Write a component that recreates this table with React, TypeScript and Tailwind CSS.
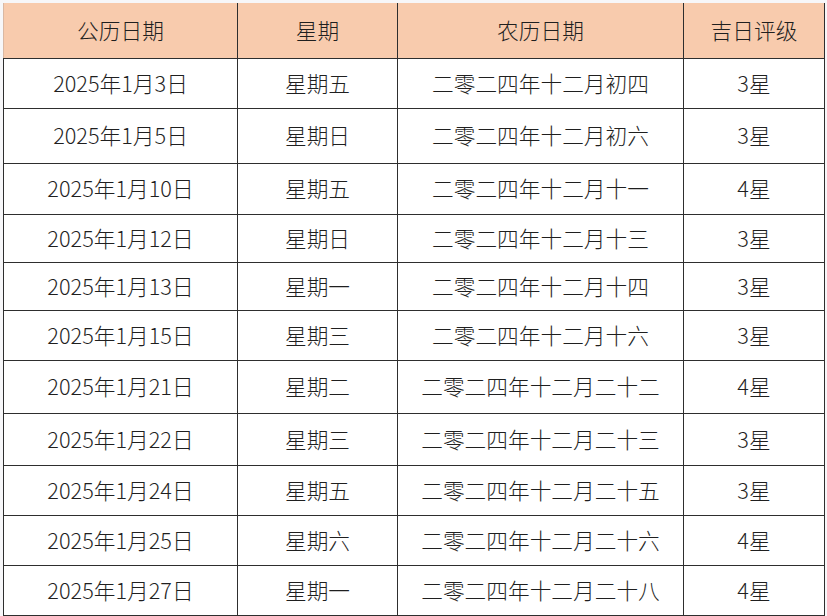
const rows = [
  { date: '2025年1月3日', week: '星期五', lunar: '二零二四年十二月初四', star: '3星', h: 'h-[50px]' },
  { date: '2025年1月5日', week: '星期日', lunar: '二零二四年十二月初六', star: '3星', h: 'h-[55px]' },
  { date: '2025年1月10日', week: '星期五', lunar: '二零二四年十二月十一', star: '4星', h: 'h-[51px]' },
  { date: '2025年1月12日', week: '星期日', lunar: '二零二四年十二月十三', star: '3星', h: 'h-[48px]' },
  { date: '2025年1月13日', week: '星期一', lunar: '二零二四年十二月十四', star: '3星', h: 'h-[48px]' },
  { date: '2025年1月15日', week: '星期三', lunar: '二零二四年十二月十六', star: '3星', h: 'h-[50px]' },
  { date: '2025年1月21日', week: '星期二', lunar: '二零二四年十二月二十二', star: '4星', h: 'h-[53px]' },
  { date: '2025年1月22日', week: '星期三', lunar: '二零二四年十二月二十三', star: '3星', h: 'h-[52px]' },
  { date: '2025年1月24日', week: '星期五', lunar: '二零二四年十二月二十五', star: '3星', h: 'h-[50px]' },
  { date: '2025年1月25日', week: '星期六', lunar: '二零二四年十二月二十六', star: '4星', h: 'h-[50px]' },
  { date: '2025年1月27日', week: '星期一', lunar: '二零二四年十二月二十八', star: '4星', h: 'h-[50px]' },
];

const cell = 'border-[1.5px] border-[#2e2e2e] text-center align-middle p-0';

export default function App() {
  return (
    <div
      className="w-[827px] h-[616px] bg-[#f7f7f9] pt-[3px] pl-[3px] overflow-hidden text-[21.7px] text-[#1f1f1f]"
      style={{ fontFamily: '"Noto Sans CJK SC", "Noto Sans", sans-serif' }}
    >
      <table className="table-fixed border-collapse w-[821px] bg-white font-light">
        <colgroup>
          <col className="w-[234px]" />
          <col className="w-[160px]" />
          <col className="w-[286px]" />
          <col className="w-[141px]" />
        </colgroup>
        <thead>
          <tr className="h-[55px] bg-[#f8cbad]">
            <th className={`${cell} font-light border-t-0 border-l-[#d9b8a3]`}>公历日期</th>
            <th className={`${cell} font-light border-t-0`}>星期</th>
            <th className={`${cell} font-light border-t-0`}>农历日期</th>
            <th className={`${cell} font-light border-t-0`}>吉日评级</th>
          </tr>
        </thead>
        <tbody>
          {rows.map((r) => (
            <tr key={r.date} className={r.h}>
              <td className={cell}>{r.date}</td>
              <td className={cell}>{r.week}</td>
              <td className={cell}>{r.lunar}</td>
              <td className={cell}>{r.star}</td>
            </tr>
          ))}
        </tbody>
      </table>
    </div>
  );
}
